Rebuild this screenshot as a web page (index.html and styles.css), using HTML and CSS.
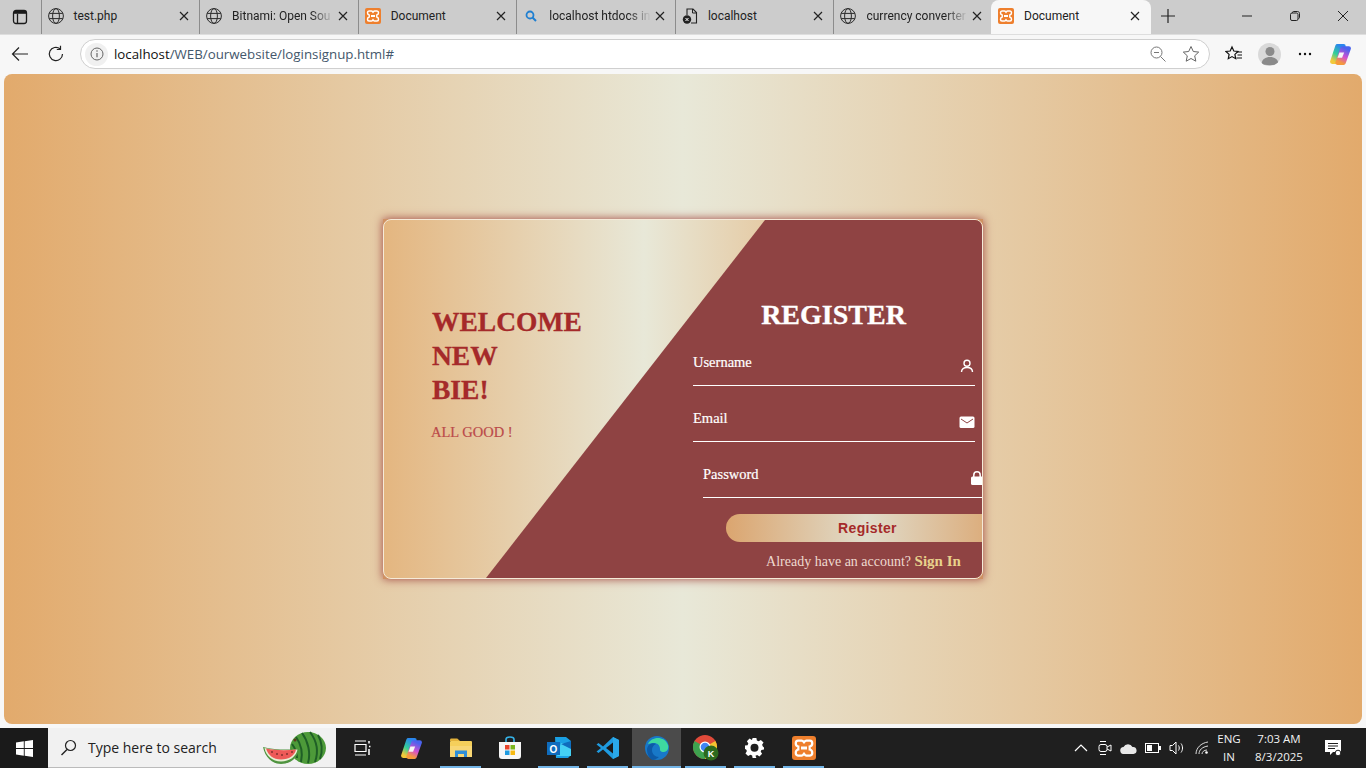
FILE: index.html
```html
<!DOCTYPE html>
<html lang="en">
<head>
  <meta charset="UTF-8">
  <meta name="viewport" content="width=device-width, initial-scale=1.0">
  <title>Document</title>
  <link rel="stylesheet" href="styles.css">
</head>
<body>
  <svg class="defs" width="0" height="0">
    <defs>
      <symbol id="globe" viewBox="0 0 16 16">
        <g fill="none" stroke="#2b2b2b" stroke-width="1">
          <circle cx="8" cy="8" r="7.4"/>
          <ellipse cx="8" cy="8" rx="3.4" ry="7.4"/>
          <path d="M1.2 5.4h13.6M1.2 10.6h13.6"/>
        </g>
      </symbol>
      <symbol id="xampp" viewBox="0 0 16 16">
        <rect width="16" height="16" rx="2" fill="#ee7f2d"/>
        <path d="M4 3h2.400c.9 0 1.200.7 1.600 1.200C8.400 3.700 8.700 3 9.600 3H12c1 0 1.500.8 1.500 1.800 0 1.300-.8 2-1.700 2.200v2c.9.200 1.700.9 1.700 2.200 0 1-.5 1.800-1.500 1.800H9.600c-.9 0-1.200-.7-1.600-1.200-.4.5-.7 1.200-1.600 1.200H4c-1 0-1.500-.8-1.500-1.800 0-1.300.8-2 1.700-2.200V7C3.300 6.800 2.500 6.100 2.500 4.800 2.500 3.800 3 3 4 3z" fill="none" stroke="#fff" stroke-width="1.500"/>
        <path d="M6 7h4v2H6z" fill="#fff"/>
      </symbol>
      <symbol id="close" viewBox="0 0 10 10">
        <path d="M1 1l8 8M9 1L1 9" fill="none" stroke="#222" stroke-width="1.200"/>
      </symbol>
      <linearGradient id="copilotA" x1="0.700" y1="0" x2="0.200" y2="1">
        <stop offset="0" stop-color="#2a86ee"/>
        <stop offset=".55" stop-color="#35cf98"/>
        <stop offset="1" stop-color="#f2c93a"/>
      </linearGradient>
      <linearGradient id="copilotB" x1="0.700" y1="0" x2="0.300" y2="1">
        <stop offset="0" stop-color="#4a63ee"/>
        <stop offset=".55" stop-color="#d24fd0"/>
        <stop offset="1" stop-color="#f59a3c"/>
      </linearGradient>
      <symbol id="copilot" viewBox="0 0 22 22">
        <path d="M8 3h6L9 18H3z" fill="url(#copilotA)" stroke="url(#copilotA)" stroke-width="4" stroke-linejoin="round"/>
        <path d="M13 5h6l-5 14H8z" fill="url(#copilotB)" stroke="url(#copilotB)" stroke-width="4" stroke-linejoin="round"/>
        <path d="M10 9h4.500l-2 5H8.200z" fill="#f6f6f6"/>
      </symbol>
    </defs>
  </svg>

  <div class="tabstrip">
    <button class="tab-toggle">
      <svg width="16" height="16" viewBox="0 0 16 16"><rect x="1.500" y="1.500" width="13" height="13" rx="2.500" fill="none" stroke="#1a1a1a" stroke-width="1.300"/><path d="M5.500 4.800v9.700" fill="none" stroke="#1a1a1a" stroke-width="1.300"/><rect x="2" y="2" width="12" height="2.800" fill="#1a1a1a"/></svg>
    </button>
    <div class="tab">
      <svg class="tab-icon"><use href="#globe"/></svg>
      <span class="tab-title">test.php</span>
      <svg class="tab-close"><use href="#close"/></svg>
    </div>
    <div class="tab">
      <svg class="tab-icon"><use href="#globe"/></svg>
      <span class="tab-title fade">Bitnami: Open Sou</span>
      <svg class="tab-close"><use href="#close"/></svg>
    </div>
    <div class="tab">
      <svg class="tab-icon"><use href="#xampp"/></svg>
      <span class="tab-title">Document</span>
      <svg class="tab-close"><use href="#close"/></svg>
    </div>
    <div class="tab">
      <svg class="tab-icon" viewBox="0 0 16 16"><circle cx="7" cy="7" r="3.500" fill="none" stroke="#1f7fd1" stroke-width="1.800"/><path d="M9.500 9.500l3.500 3.500" stroke="#1f7fd1" stroke-width="2"/></svg>
      <span class="tab-title fade">localhost htdocs in</span>
      <svg class="tab-close"><use href="#close"/></svg>
    </div>
    <div class="tab">
      <svg class="tab-icon" viewBox="0 0 16 16"><path d="M5 7V1h6l3.500 3.500V15H9" fill="none" stroke="#222" stroke-width="1.100"/><path d="M10.500 1v4h4" fill="none" stroke="#222"/><circle cx="5" cy="11.500" r="4.200" fill="#222"/><path d="M3.500 10l3 3M6.500 10l-3 3" stroke="#fff"/></svg>
      <span class="tab-title">localhost</span>
      <svg class="tab-close"><use href="#close"/></svg>
    </div>
    <div class="tab">
      <svg class="tab-icon"><use href="#globe"/></svg>
      <span class="tab-title fade">currency converter</span>
      <svg class="tab-close"><use href="#close"/></svg>
    </div>
    <div class="tab active">
      <svg class="tab-icon"><use href="#xampp"/></svg>
      <span class="tab-title">Document</span>
      <svg class="tab-close"><use href="#close"/></svg>
    </div>
    <svg class="new-tab" width="16" height="16" viewBox="0 0 16 16"><path d="M8 1v14M1 8h14" stroke="#222" stroke-width="1.200"/></svg>
    <div class="window-btns">
      <svg width="12" height="12" viewBox="0 0 12 12"><path d="M1 6h10" stroke="#222" stroke-width="1"/></svg>
      <svg width="12" height="12" viewBox="0 0 12 12"><rect x="1.500" y="3" width="7.500" height="7.500" rx="1.500" fill="none" stroke="#222"/><path d="M3.500 3V2.500c0-.7.500-1 1-1h4c1.200 0 2 .8 2 2v4c0 .6-.4 1-1 1" fill="none" stroke="#222"/></svg>
      <svg width="12" height="12" viewBox="0 0 12 12"><path d="M1 1l10 10M11 1L1 11" stroke="#222" stroke-width="1"/></svg>
    </div>
  </div>

  <div class="toolbar">
    <svg class="tool-back" width="18" height="16" viewBox="0 0 18 16"><path d="M17 8H1.500M8 1.500L1.500 8 8 14.500" fill="none" stroke="#222" stroke-width="1.200"/></svg>
    <svg class="tool-reload" width="18" height="18" viewBox="0 0 18 18"><path d="M15.500 9A6.600 6.600 0 1 1 13 3.800" fill="none" stroke="#222" stroke-width="1.200"/><path d="M13.500 .8v3.700H9.800" fill="none" stroke="#222" stroke-width="1.200"/></svg>
    <div class="addressbar">
      <span class="site-info">
        <svg width="14" height="14" viewBox="0 0 14 14"><circle cx="7" cy="7" r="6" fill="none" stroke="#666" stroke-width="1"/><path d="M7 6v4.200" stroke="#666" stroke-width="1.200"/><circle cx="7" cy="4" r=".8" fill="#666"/></svg>
      </span>
      <span class="url"><span class="url-host">localhost</span>/WEB/ourwebsite/loginsignup.html#</span>
      <svg class="zoom-out" width="16" height="16" viewBox="0 0 16 16"><circle cx="6.500" cy="6.500" r="5.500" fill="none" stroke="#777"/><path d="M10.500 10.500l5 5M4 6.500h5" stroke="#777"/></svg>
      <svg class="fav-star" width="18" height="18" viewBox="0 0 18 18"><path d="M9 1.500l2.300 5 5.400.6-4 3.700 1.100 5.400L9 13.500l-4.800 2.700 1.100-5.400-4-3.700 5.400-.6z" fill="none" stroke="#666"/></svg>
    </div>
    <svg class="tool-favs" width="18" height="18" viewBox="0 0 18 18"><path d="M7 2l1.800 4 4.200.5-3.100 2.900.8 4.300L7 11.600l-3.700 2.100.8-4.300L1 6.500 5.200 6z" fill="none" stroke="#111" stroke-width="1.200"/><path d="M12 7h5M12.500 10h4.500M11.500 13H17" stroke="#111"/></svg>
    <span class="avatar">
      <svg width="22" height="22" viewBox="0 0 22 22"><circle cx="11" cy="7.500" r="4.500" fill="#8a8a8a"/><path d="M2.500 20c.5-5 4-7 8.500-7s8 2 8.500 7c-2 1.500-15 1.500-17 0z" fill="#8a8a8a"/></svg>
    </span>
    <svg class="tool-more" width="14" height="4" viewBox="0 0 14 4"><circle cx="2" cy="2" r="1.200" fill="#111"/><circle cx="7" cy="2" r="1.200" fill="#111"/><circle cx="12" cy="2" r="1.200" fill="#111"/></svg>
    <svg class="tool-copilot" width="23" height="23"><use href="#copilot"/></svg>
  </div>

  <main class="viewport">
    <div class="card">
      <div class="card-inner">
        <div class="card-slant"></div>
        <section class="welcome">
          <h2>WELCOME<br>NEW<br>BIE!</h2>
          <p>ALL GOOD !</p>
        </section>
        <form class="register" onsubmit="return false">
          <h2>REGISTER</h2>
          <label class="field">
            <span>Username</span>
            <svg width="16" height="16" viewBox="0 0 16 16"><circle cx="8" cy="5.200" r="3" fill="none" stroke="#fff" stroke-width="1.400"/><path d="M2.500 14c0-3 2.400-4.500 5.500-4.500s5.500 1.500 5.500 4.500" fill="none" stroke="#fff" stroke-width="1.400"/></svg>
          </label>
          <label class="field">
            <span>Email</span>
            <svg width="16" height="16" viewBox="0 0 16 16"><rect x=".5" y="2.500" width="15" height="11.500" rx="1.500" fill="#fff"/><path d="M2 5l6 4 6-4" fill="none" stroke="#8f4343"/></svg>
          </label>
          <label class="field field-pass">
            <span>Password</span>
            <svg width="16" height="16" viewBox="0 0 16 16"><rect x="2" y="6.500" width="12" height="8.500" rx="1.500" fill="#fff"/><path d="M4.800 7V5a3.200 3.200 0 0 1 6.400 0v2" fill="none" stroke="#fff" stroke-width="1.500"/></svg>
          </label>
          <button class="register-btn">Register</button>
          <p class="signin">Already have an account? <a href="#">Sign In</a></p>
        </form>
      </div>
    </div>
  </main>

  <footer class="taskbar">
    <div class="start">
      <svg width="17" height="17" viewBox="0 0 17 17"><path d="M0 2.400L7.800 1.300V8H0zM8.700 1.200L17 0v8H8.700zM0 9h7.800v6.700L0 14.600zM8.700 9H17v8l-8.300-1.200z" fill="#fff"/></svg>
    </div>
    <div class="search">
      <svg width="17" height="17" viewBox="0 0 17 17"><circle cx="10.500" cy="6.500" r="5" fill="none" stroke="#222" stroke-width="1.200"/><path d="M7 10.500l-5.500 5.500" stroke="#222" stroke-width="1.400"/></svg>
      <span class="search-text">Type here to search</span>
      <svg class="melon" width="64" height="34" viewBox="0 0 64 34">
        <ellipse cx="45" cy="17" rx="18" ry="16" fill="#4d9a39"/>
        <path d="M33 6c5 7 7 16 5 25M39 2c6 8 9 20 6 30M47 1c6 8 9 19 5 30M55 4c4 7 5 15 2 24M29 13c3 4 5 9 5 14" fill="none" stroke="#1f5f26" stroke-width="2"/>
        <circle cx="32" cy="9" r="1.500" fill="#5b3a1d"/>
        <path d="M0 16c12 3 24 3 36 2-1 9-9 15-18 15S2 26 0 16z" fill="#4f9440"/>
        <path d="M1.500 17c11 2.500 22 2.500 33 1.500-1 7-8 12-16.500 12S3 25 1.500 17z" fill="#e9efd5"/>
        <path d="M3 17.500c10 2 20 2 30 1-1 6-7 10-15 10S5 24 3 17.500z" fill="#ee5a58"/>
        <g fill="#3a1512"><circle cx="9" cy="21" r=".8"/><circle cx="14" cy="23" r=".8"/><circle cx="19" cy="24" r=".8"/><circle cx="24" cy="23" r=".8"/><circle cx="29" cy="21" r=".8"/></g>
      </svg>
    </div>
    <div class="task-icons">
      <div class="task">
        <svg width="17" height="16" viewBox="0 0 17 16"><path d="M1 1h11M1 15h11M1 4.500h11v7H1z" fill="none" stroke="#fff" stroke-width="1.200"/><path d="M15 1v2.500M15 6.500h1.500M15 9v6" stroke="#fff" stroke-width="1.500"/></svg>
      </div>
      <div class="task">
        <svg width="23" height="23"><use href="#copilot"/></svg>
      </div>
      <div class="task running">
        <svg width="22" height="20" viewBox="0 0 22 20"><path d="M0 2c0-.8.500-1.500 1.300-1.500h6L10 3H0z" fill="#e3b23b"/><rect y="3" width="22" height="16" rx="1" fill="#f5cf5b"/><rect y="8" width="22" height="11" fill="#f8d775"/><path d="M5 19v-6.500h12V19h-3v-3H8v3z" fill="#2f8fd8"/></svg>
      </div>
      <div class="task">
        <svg width="24" height="24" viewBox="0 0 24 24"><path d="M8 6V3.500C8 2 9.500 1 12 1s4 1 4 2.500V6" fill="none" stroke="#35b3e8" stroke-width="1.600"/><path d="M1 6h22v14a3 3 0 0 1-3 3H4a3 3 0 0 1-3-3z" fill="#f6f6f6"/><rect x="7" y="9" width="4.500" height="4.500" fill="#e8452c"/><rect x="12.500" y="9" width="4.500" height="4.500" fill="#7ab51d"/><rect x="7" y="14.500" width="4.500" height="4.500" fill="#1f9be0"/><rect x="12.500" y="14.500" width="4.500" height="4.500" fill="#f6b912"/></svg>
      </div>
      <div class="task running">
        <svg width="24" height="24" viewBox="0 0 24 24"><path d="M8 1h11l5 4v14l-3 3H9z" fill="#1aa0e4"/><path d="M14 7h10v13H10z" fill="#44d0f4"/><path d="M14 8l10-3v8z" fill="#0f6cbd"/><rect y="6" width="13" height="13" fill="#0f6cbd"/><text class="outlook-o" x="6.500" y="16.500" text-anchor="middle">O</text></svg>
      </div>
      <div class="task running">
        <svg width="24" height="24" viewBox="0 0 24 24"><path d="M17 1l6 3v16l-6 3L7 13.500 2.500 17 .5 15.500 5 12 .5 8.500 2.500 7 7 10.500z" fill="#1f9be0"/><path d="M17 6.500L10 12l7 5.500z" fill="#1a1a1a"/><path d="M17 1l6 3v16l-6 3z" fill="#2aa9ea"/></svg>
      </div>
      <div class="task running current">
        <svg width="24" height="24" viewBox="0 0 24 24"><circle cx="12" cy="12" r="12" fill="#1878c8"/><path d="M3 8C6 1 19-1 23 9c1 4-1 7-4 7-4 0-4-2-4-3 0-4-3-6-6-6S4 8 3 8z" fill="#3ed8a0"/><path d="M2 14c0-5 5-8 9-6-3 1-4 4-4 6 0 4 3 7 7 7-2 2-5 3-7 3-3-2-5-6-5-10z" fill="#0d5aa7"/></svg>
      </div>
      <div class="task running">
        <svg width="26" height="26" viewBox="0 0 26 26"><circle cx="12" cy="12" r="12" fill="#e04a3a"/><path d="M12 12L22.400 6A12 12 0 0 1 12 24z" fill="#f4c430"/><path d="M12 12L12 24A12 12 0 0 1 1.600 6z" fill="#3ea24f"/><circle cx="12" cy="12" r="5.500" fill="#fff"/><circle cx="12" cy="12" r="4.300" fill="#4285f4"/><circle cx="18" cy="18" r="7.500" fill="#2c6a1e"/><text class="chrome-k" x="18" y="21.500" text-anchor="middle">K</text></svg>
      </div>
      <div class="task running">
        <svg width="20" height="20" viewBox="0 0 20 20"><path d="M8 0h4l.5 2.700 1.800.8L16.700 2l2.800 2.800-1.500 2.400.8 1.800L20 10v0l0 2-2.700.5-.8 1.800 1.500 2.400-2.800 2.800-2.400-1.500-1.800.8L12 21H8l-.5-2.700-1.800-.8L3.300 19 .5 16.200 2 13.800l-.8-1.800L0 11.500V8l2.700-.5.8-1.800L2 3.300 4.800.5l2.400 1.500L7.500 1.700z" fill="#fff" transform="scale(.95)"/><circle cx="9.500" cy="9.700" r="4" fill="#1f1f1f"/></svg>
      </div>
      <div class="task running">
        <svg width="24" height="24"><use href="#xampp"/></svg>
      </div>
    </div>
    <div class="tray">
      <svg class="tray-chevron" width="14" height="8" viewBox="0 0 14 8"><path d="M1 7l6-6 6 6" fill="none" stroke="#fff" stroke-width="1.200"/></svg>
      <svg class="tray-meet" width="14" height="16" viewBox="0 0 14 16"><rect x="1" y="4.500" width="8" height="7" rx="2" fill="none" stroke="#fff"/><path d="M9 7l4-2v6l-4-2" fill="none" stroke="#fff"/><path d="M2 1.500h6M2 14.500h6" stroke="#fff"/></svg>
      <svg class="tray-cloud" width="17" height="11" viewBox="0 0 17 11"><path d="M4 11a3.500 3.500 0 0 1-.5-7A5 5 0 0 1 12.500 4 3.500 3.500 0 0 1 13.500 11z" fill="#e8e8e8"/></svg>
      <svg class="tray-battery" width="16" height="10" viewBox="0 0 16 10"><rect x=".5" y=".5" width="13" height="9" fill="none" stroke="#fff"/><rect x="2" y="2" width="5" height="6" fill="#fff"/><rect x="14" y="3" width="2" height="4" fill="#fff"/></svg>
      <svg class="tray-sound" width="16" height="14" viewBox="0 0 16 14"><path d="M1 4.500h2.500L7 1v12L3.500 9.500H1z" fill="none" stroke="#fff"/><path d="M9.500 4.500c1 1.500 1 3.500 0 5M12 2.500c2 2.500 2 6.500 0 9" fill="none" stroke="#fff"/></svg>
      <svg class="tray-wifi" width="14" height="14" viewBox="0 0 14 14"><path d="M1 13C1 7 6 2 13 1M4 13c0-4 3-7 9-8M7 13c0-2 2-4 5-4" fill="none" stroke="#ddd"/><circle cx="11.500" cy="11.500" r="1.300" fill="#fff"/></svg>
      <div class="tray-lang">ENG<br>IN</div>
      <div class="tray-clock">7:03 AM<br>8/3/2025</div>
      <svg class="tray-note" width="17" height="17" viewBox="0 0 17 17"><path d="M0 0h16v12H8l-3 3v-3H0z" fill="#fff"/><path d="M3 3.500h10M3 6h10M3 8.500h7" stroke="#1f1f1f"/><circle cx="13" cy="13" r="2.800" fill="#fff" stroke="#1f1f1f"/></svg>
    </div>
  </footer>
</body>
</html>
```

FILE: styles.css
```css
* {
  box-sizing: border-box;
}
html, body {
  margin: 0;
  padding: 0;
}
body {
  width: 1366px;
  height: 768px;
  overflow: hidden;
  display: flex;
  flex-direction: column;
  background: #f7f7f7;
  font-family: "Open Sans", "Liberation Sans", sans-serif;
}
.defs {
  position: absolute;
}

/* browser tabs */
.tabstrip {
  height: 34px;
  flex: none;
  display: flex;
  align-items: stretch;
  background: #cccccc;
}
.tab-toggle {
  width: 40.500px;
  flex: none;
  border: 0;
  padding: 0;
  background: none;
  display: flex;
  align-items: center;
  justify-content: center;
}
.tab {
  width: 158.600px;
  flex: none;
  display: flex;
  align-items: center;
  padding: 0 10px 3px 6px;
  border-left: 1px solid #8c8c8c;
  background-clip: padding-box;
  font-family: Roboto, "Open Sans", sans-serif;
  font-size: 12px;
  color: #222;
}
.tab-icon {
  width: 16px;
  height: 16px;
  flex: none;
}
.tab-title {
  margin-left: 10px;
  flex: 1 1 0;
  min-width: 0;
  white-space: nowrap;
}
.tab-title.fade {
  -webkit-mask-image: linear-gradient(90deg, #000 76%, transparent 98%);
  mask-image: linear-gradient(90deg, #000 76%, transparent 98%);
}
.tab-close {
  width: 10px;
  height: 10px;
  flex: none;
  margin-left: 2px;
}
.tab.active {
  background: #f7f7f7;
  border-left: 0;
  border-radius: 8px 8px 0 0;
  margin-left: -1px;
  width: 160px;
  padding-left: 7px;
  padding-right: 11px;
}
.new-tab {
  align-self: center;
  margin-left: 9px;
  margin-bottom: 3px;
}
.window-btns {
  margin-left: auto;
  width: 138px;
  display: flex;
  align-items: center;
  justify-content: space-between;
  padding: 0 17px 2px 13px;
}

/* address row */
.toolbar {
  height: 39px;
  flex: none;
  display: flex;
  align-items: center;
  border-top: 1px solid #dedede;
  background: #f7f7f7;
}
.tool-back {
  margin-left: 11px;
}
.tool-reload {
  margin-left: 18px;
}
.addressbar {
  margin-left: 15px;
  width: 1130px;
  height: 30px;
  display: flex;
  align-items: center;
  background: #fff;
  border: 1px solid #cfcfcf;
  border-radius: 15px;
  padding-left: 4px;
}
.site-info {
  width: 23px;
  height: 23px;
  border-radius: 50%;
  background: #f0f0f0;
  display: flex;
  align-items: center;
  justify-content: center;
}
.url {
  margin-left: 6px;
  flex: 1;
  font-size: 13.300px;
  color: #44576b;
  white-space: nowrap;
}
.url-host {
  color: #111;
}
.zoom-out {
  margin-right: 16px;
}
.fav-star {
  margin-right: 9px;
}
.tool-favs {
  margin-left: 15px;
}
.avatar {
  margin-left: 15px;
  width: 23px;
  height: 23px;
  border-radius: 50%;
  background: #d9d9d9;
  overflow: hidden;
  display: flex;
  align-items: flex-end;
  justify-content: center;
}
.tool-more {
  margin-left: 17px;
}
.tool-copilot {
  margin-left: 17px;
}

/* page */
.viewport {
  height: 650px;
  flex: none;
  margin: 1px 4px 0;
  border-radius: 8px;
  background: linear-gradient(90deg, #e2aa6c 0%, #e8e8d8 50%, #e2aa6c 100%);
  display: flex;
  align-items: center;
  justify-content: center;
}
.card {
  width: 600px;
  height: 360px;
  background: #cf9163;
  box-shadow: 0 0 9px #a0453f;
}
.card-inner {
  position: relative;
  height: 100%;
  display: flex;
  overflow: hidden;
  border: 1px solid #f5ead8;
  border-radius: 8px;
  background: linear-gradient(90deg, #e4b680 0%, #e8e8d8 43.500%, #e2aa6c 87%);
}
.card-slant {
  position: absolute;
  inset: 0;
  background: #8f4343;
  clip-path: polygon(381px 0, 100% 0, 100% 100%, 102px 100%);
}
.welcome, .register {
  position: relative;
  width: 299px;
  flex: none;
  font-family: "Liberation Serif", serif;
}
.welcome {
  padding: 85px 0 0 48px;
}
.welcome h2 {
  margin: 0;
  font-size: 27.500px;
  line-height: 34px;
  color: #a52a2a;
  -webkit-text-stroke: .3px #a52a2a;
}
.welcome p {
  margin: 16px 0 0 -1px;
  font-size: 14.500px;
  line-height: 18px;
  color: #bb4a4a;
  -webkit-text-stroke: .2px #bb4a4a;
}
.register {
  padding-top: 78px;
  color: #fff;
}
.register h2 {
  margin: 0 0 14px;
  font-size: 28px;
  line-height: 34px;
  text-align: center;
  padding-left: 2px;
  -webkit-text-stroke: .3px #fff;
}
.field {
  display: flex;
  justify-content: space-between;
  width: 282px;
  height: 40px;
  margin: 0 0 16px 10px;
  padding: 7px 0 0;
  border-bottom: 1px solid #fff;
  font-size: 14.500px;
  line-height: 18px;
  -webkit-text-stroke: .2px #fff;
}
.field svg {
  margin-top: 5px;
}
.field-pass {
  margin-left: 20px;
}
.register-btn {
  display: block;
  width: 280px;
  height: 28px;
  margin: 0 0 10px 43px;
  padding: 0 0 0 3px;
  border: 0;
  border-radius: 14px;
  background: linear-gradient(90deg, #dba56f 0%, #e0dccb 50%, #dba56f 100%);
  font-family: "Liberation Sans", sans-serif;
  font-size: 14px;
  font-weight: 700;
  letter-spacing: .35px;
  color: #a52a2a;
}
.signin {
  margin: 0;
  padding-left: 62px;
  text-align: center;
  font-size: 14px;
  line-height: 18px;
  color: #eed9cf;
}
.signin a {
  font-size: 15px;
  font-weight: 700;
  color: #e8d28c;
  text-decoration: none;
}

/* windows taskbar */
.taskbar {
  height: 40px;
  margin-top: 4px;
  flex: none;
  display: flex;
  align-items: stretch;
  background: #1f1f1f;
  color: #fff;
}
.start {
  width: 48px;
  display: flex;
  align-items: center;
  justify-content: center;
  background: #1a1a1a;
}
.search {
  width: 288px;
  display: flex;
  align-items: center;
  padding-left: 12px;
  background: #f1f1f1;
  border-bottom: 1px solid #bbb;
  color: #222;
}
.search-text {
  margin-left: 11px;
  font-size: 14px;
  flex: 1;
}
.melon {
  margin-right: 9px;
}
.task-icons {
  display: flex;
  margin-left: 2px;
}
.task {
  width: 49px;
  display: flex;
  align-items: center;
  justify-content: center;
  position: relative;
}
.task.running::after {
  content: "";
  position: absolute;
  left: 4px;
  right: 4px;
  bottom: 0;
  height: 2px;
  background: #72b4e6;
}
.task.current {
  background: #4b4b4b;
}
.task.current::after {
  left: 0;
  right: 0;
}
.outlook-o {
  font-family: "Liberation Sans", sans-serif;
  font-size: 10px;
  font-weight: 700;
  fill: #fff;
}
.chrome-k {
  font-family: "Liberation Sans", sans-serif;
  font-size: 9px;
  font-weight: 700;
  fill: #fff;
}
.tray {
  margin-left: auto;
  display: flex;
  align-items: center;
  font-size: 11.500px;
  line-height: 18px;
  color: #f2f2f2;
  text-align: center;
}
.tray-chevron {
  margin-right: 10px;
}
.tray-meet {
  margin-right: 8px;
}
.tray-cloud {
  margin-right: 8px;
}
.tray-battery {
  margin-right: 8px;
}
.tray-sound {
  margin-right: 10px;
}
.tray-wifi {
  margin-right: 6px;
}
.tray-lang {
  width: 28px;
}
.tray-clock {
  width: 72px;
}
.tray-note {
  margin: 0 24px 0 10px;
}
```
